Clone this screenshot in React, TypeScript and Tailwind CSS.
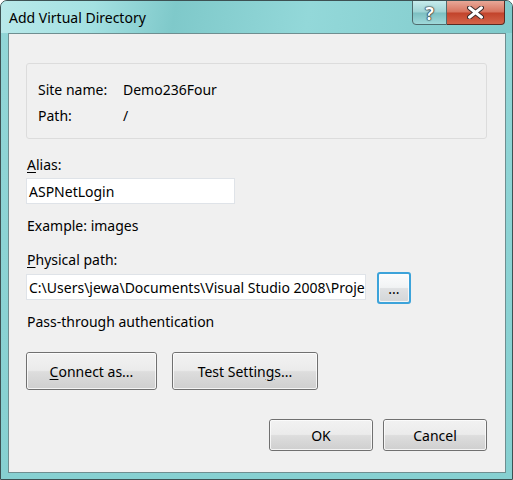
import React from "react";

const font = { fontFamily: '"Noto Sans", "Open Sans", sans-serif' };

const WinButton = ({
  children,
  className = "",
  focused = false,
}: {
  children: React.ReactNode;
  className?: string;
  focused?: boolean;
}) => (
  <button
    className={
      "relative flex items-center justify-center rounded-[3px] text-[14px] text-black " +
      (focused
        ? "border-2 border-[#3ca3da] bg-[linear-gradient(to_bottom,#fbfcfd_0%,#f1f3f4_48%,#dfe1e3_52%,#d3d6d8_100%)] "
        : "border border-[#707070] bg-[linear-gradient(to_bottom,#f2f2f2_0%,#ebebeb_48%,#dddddd_52%,#cfcfcf_100%)] ") +
      className
    }
  >
    <span className="absolute inset-0 rounded-[2px] border border-[#fcfcfc]/80" />
    <span className="relative">{children}</span>
  </button>
);

const App = () => {
  return (
    <div
      className="w-[513px] h-[480px] overflow-hidden rounded-t-[7px] border border-[#3d5153] bg-[linear-gradient(to_bottom,#92d6d7,#86d0d1)]"
      style={font}
    >
      {/* Title bar */}
      <div className="relative h-[32px] bg-[linear-gradient(100deg,#b9e9ea_0%,#a4e1e2_18%,#7fc9ca_34%,#93d8d9_60%,#7fcacb_100%)]">
        <div className="pl-[8px] pt-[7px] text-[14px] leading-[20px] text-black">
          Add Virtual Directory
        </div>
        <div className="absolute right-[7px] top-[-1px] flex">
          <div className="flex h-[25px] w-[35px] items-center justify-center rounded-bl-[4px] border border-[#4f6b6d] bg-[linear-gradient(to_bottom,#c6ebec_0%,#9fd4d5_48%,#7cbfc1_52%,#9fd9da_100%)]">
            <span
              className="text-[18px] font-bold leading-none text-white"
              style={{ textShadow: "0 0 1px #111, 0 0 1px #111, 0 0 2px #223" }}
            >
              ?
            </span>
          </div>
          <div className="flex h-[25px] w-[58px] items-center justify-center rounded-br-[4px] border border-l-0 border-[#5a2a22] bg-[linear-gradient(to_bottom,#e8a898_0%,#d7735e_48%,#c2432b_52%,#d4644a_100%)]">
            <svg width="17" height="13" viewBox="0 0 17 13">
              <path
                d="M2.5 1.8 L14.5 11.2 M14.5 1.8 L2.5 11.2"
                stroke="#3a2a2a"
                strokeWidth="5"
                strokeLinecap="round"
              />
              <path
                d="M2.5 1.8 L14.5 11.2 M14.5 1.8 L2.5 11.2"
                stroke="#ffffff"
                strokeWidth="3"
                strokeLinecap="round"
              />
            </svg>
          </div>
        </div>
      </div>

      {/* Client area */}
      <div className="ml-[7px] h-[440px] w-[498px] border border-[#6f8e90] bg-[#f0f0f0] text-[14px] text-black">
        <div className="ml-[17px] mt-[29px] h-[76px] w-[461px] rounded-[3px] border border-[#dcdcdc] pl-[11px] pt-[12px]">
          <div className="flex h-[26px] items-center">
            <span className="w-[85px]">Site name:</span>
            <span>Demo236Four</span>
          </div>
          <div className="flex h-[26px] items-center">
            <span className="w-[85px]">Path:</span>
            <span>/</span>
          </div>
        </div>

        <div className="ml-[18px] mt-[16px] h-[20px] leading-[20px]">
          <span className="underline underline-offset-2">A</span>lias:
        </div>
        <div className="ml-[17px] mt-[3px] flex h-[26px] w-[209px] items-center border border-[#dfe3e8] bg-white pl-[2px]">
          ASPNetLogin
        </div>

        <div className="ml-[18px] mt-[12px] h-[20px] leading-[20px]">
          Example: images
        </div>

        <div className="ml-[18px] mt-[14px] h-[20px] leading-[20px]">
          <span className="underline underline-offset-2">P</span>hysical path:
        </div>
        <div className="ml-[17px] mt-[2px] flex h-[32px] items-start gap-[11px]">
          <div className="mt-[2px] flex h-[26px] w-[340px] items-center whitespace-nowrap border border-[#dfe3e8] bg-white pl-[2px]">
            C:\Users\jewa\Documents\Visual Studio 2008\Proje
          </div>
          <WinButton focused className="h-[32px] w-[34px] text-[12px]">
            ...
          </WinButton>
        </div>

        <div className="ml-[18px] mt-[8px] h-[20px] leading-[20px]">
          Pass-through authentication
        </div>

        <div className="ml-[17px] mt-[20px] flex gap-[15px]">
          <WinButton className="h-[38px] w-[131px]">
            <span className="underline underline-offset-2">C</span>onnect as...
          </WinButton>
          <WinButton className="h-[38px] w-[146px]">
            Test Settin<span className="underline underline-offset-2">g</span>s...
          </WinButton>
        </div>

        <div className="mr-[18px] mt-[29px] flex justify-end gap-[10px]">
          <WinButton className="h-[32px] w-[104px]">OK</WinButton>
          <WinButton className="h-[32px] w-[104px]">Cancel</WinButton>
        </div>
      </div>
    </div>
  );
};

export default App;
